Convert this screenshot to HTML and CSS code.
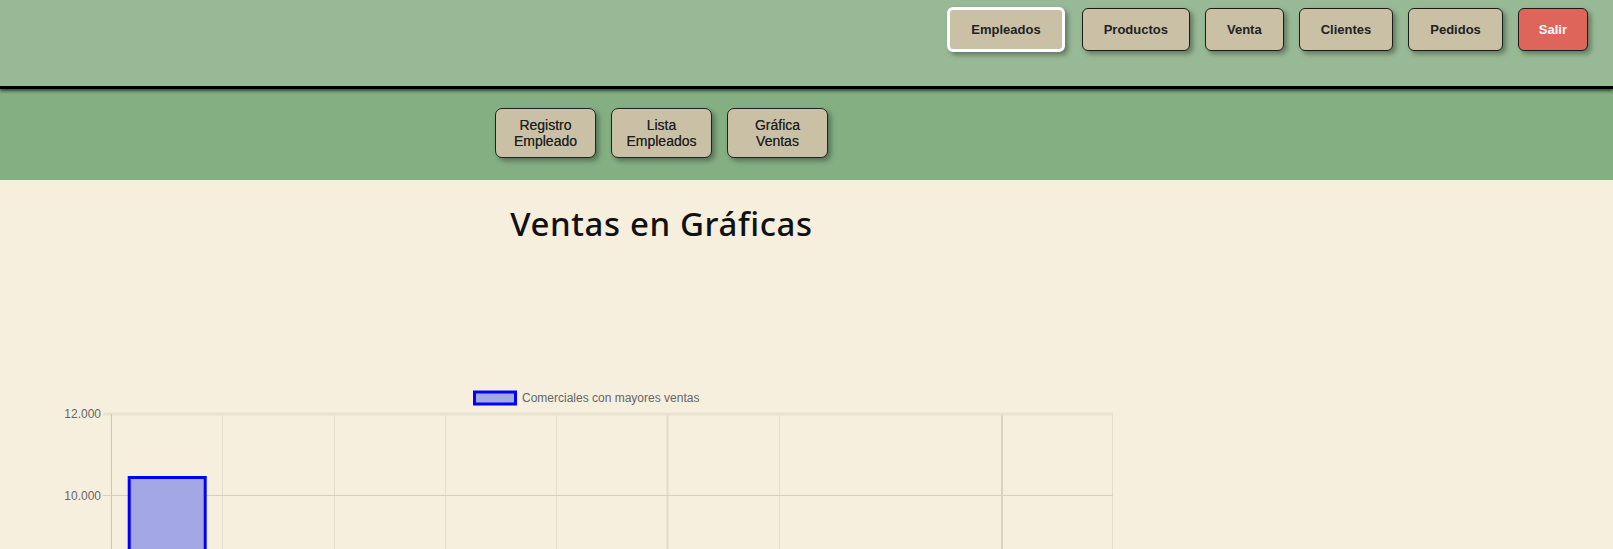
FILE: index.html
```html
<!DOCTYPE html>
<html lang="es">
<head>
<meta charset="utf-8">
<title>Ventas en Gráficas</title>
<link rel="stylesheet" href="styles.css">
</head>
<body>
<header class="topbar">
  <nav class="mainnav">
    <button class="navbtn active">Empleados</button>
    <button class="navbtn">Productos</button>
    <button class="navbtn">Venta</button>
    <button class="navbtn">Clientes</button>
    <button class="navbtn">Pedidos</button>
    <button class="navbtn danger">Salir</button>
  </nav>
</header>
<div class="subbar">
  <div class="container subnav">
    <button class="subbtn">Registro<br>Empleado</button>
    <button class="subbtn">Lista<br>Empleados</button>
    <button class="subbtn">Gráfica<br>Ventas</button>
  </div>
</div>
<main class="container content">
  <h1 class="title">Ventas en Gráficas</h1>
  <div class="chart">
    <svg class="chart-svg" width="1130" height="169" viewBox="0 0 1130 169">
      <!-- legend -->
      <rect x="474.5" y="12" width="41" height="12" fill="#a3a8e4" stroke="#0000ff" stroke-width="3"/>
      <text x="522" y="22" class="chart-text">Comerciales con mayores ventas</text>
      <!-- vertical grid -->
      <g stroke="#e6dcc8" stroke-width="1">
        <line x1="222.5" y1="34" x2="222.5" y2="169"/>
        <line x1="334.5" y1="34" x2="334.5" y2="169"/>
        <line x1="445.5" y1="34" x2="445.5" y2="169"/>
        <line x1="556.5" y1="34" x2="556.5" y2="169"/>
        <line x1="779.5" y1="34" x2="779.5" y2="169"/>
        <line x1="1112.5" y1="34" x2="1112.5" y2="169"/>
      </g>
      <line x1="667.5" y1="34" x2="667.5" y2="169" stroke="#e3d9c5" stroke-width="2"/>
      <line x1="1002" y1="34" x2="1002" y2="169" stroke="#dbd1bd" stroke-width="2"/>
      <!-- horizontal grid -->
      <line x1="103" y1="34" x2="1113" y2="34" stroke="#eae1cf" stroke-width="3"/>
      <line x1="103" y1="115.5" x2="1113" y2="115.5" stroke="#d9cfbb" stroke-width="1"/>
      <!-- axis -->
      <line x1="111.5" y1="34" x2="111.5" y2="169" stroke="#cdc3af" stroke-width="1"/>
      <text x="101" y="38" class="chart-text" text-anchor="end">12.000</text>
      <text x="101" y="119.5" class="chart-text" text-anchor="end">10.000</text>
      <!-- bar -->
      <rect x="129.2" y="97.5" width="76" height="200" fill="#a3a8e4" stroke="#0000ff" stroke-width="3"/>
    </svg>
  </div>
</main>
</body>
</html>
```
FILE: styles.css
```css
* { box-sizing: border-box; }

html, body {
  margin: 0;
  padding: 0;
}

body {
  background: #f7efde;
  font-family: "Liberation Sans", Arial, sans-serif;
  color: #222;
}

.topbar {
  position: relative;
  z-index: 2;
  height: 89px;
  background: #98b996;
  border-bottom: 3px solid #000;
  box-shadow: 0 2px 3px rgba(0, 0, 0, 0.6);
}

.mainnav {
  display: flex;
  justify-content: flex-end;
  align-items: center;
  gap: 15px;
  padding: 7px 25px 0 0;
}

.navbtn {
  font-family: "Liberation Sans", Arial, sans-serif;
  font-size: 13px;
  font-weight: bold;
  line-height: 17px;
  color: #222;
  background: #c9c0a6;
  border: 1px solid #1a1a1a;
  border-radius: 6px;
  padding: 12px 21px;
  box-shadow: 3px 3px 5px rgba(0, 0, 0, 0.35);
  cursor: pointer;
}

.navbtn.active {
  border: 3px solid #fff;
  padding: 11px 21px;
  margin-right: 2px;
}

.navbtn.danger {
  background: #dd655a;
  color: #fff;
  padding: 12px 20px;
}

.subbar {
  background: #83af83;
  height: 91px;
}

.container {
  width: 1323px;
}

.subnav {
  display: flex;
  justify-content: center;
  gap: 15px;
  padding-top: 19px;
}

.subbtn {
  width: 101px;
  height: 50px;
  font-family: "Liberation Sans", Arial, sans-serif;
  font-size: 14px;
  line-height: 16px;
  color: #1e1e1e;
  text-shadow: 0 0 0.6px rgba(0, 0, 0, 0.6);
  background: #c9c0a6;
  border: 1px solid #222;
  border-radius: 7px;
  padding: 8px 4px;
  box-shadow: 3px 3px 5px rgba(0, 0, 0, 0.35);
  cursor: pointer;
}

.content {
  display: flex;
  flex-direction: column;
  align-items: center;
}

.title {
  margin: 24px 0 0;
  font-family: "Noto Sans", sans-serif;
  font-weight: 500;
  font-size: 33px;
  letter-spacing: 0.6px;
  line-height: 40px;
  color: #111;
}

.chart {
  align-self: flex-start;
  margin-top: 136px;
}

.chart-svg {
  display: block;
}

.chart-text {
  font-family: "Liberation Sans", Arial, sans-serif;
  font-size: 12px;
  fill: #666;
}
```
